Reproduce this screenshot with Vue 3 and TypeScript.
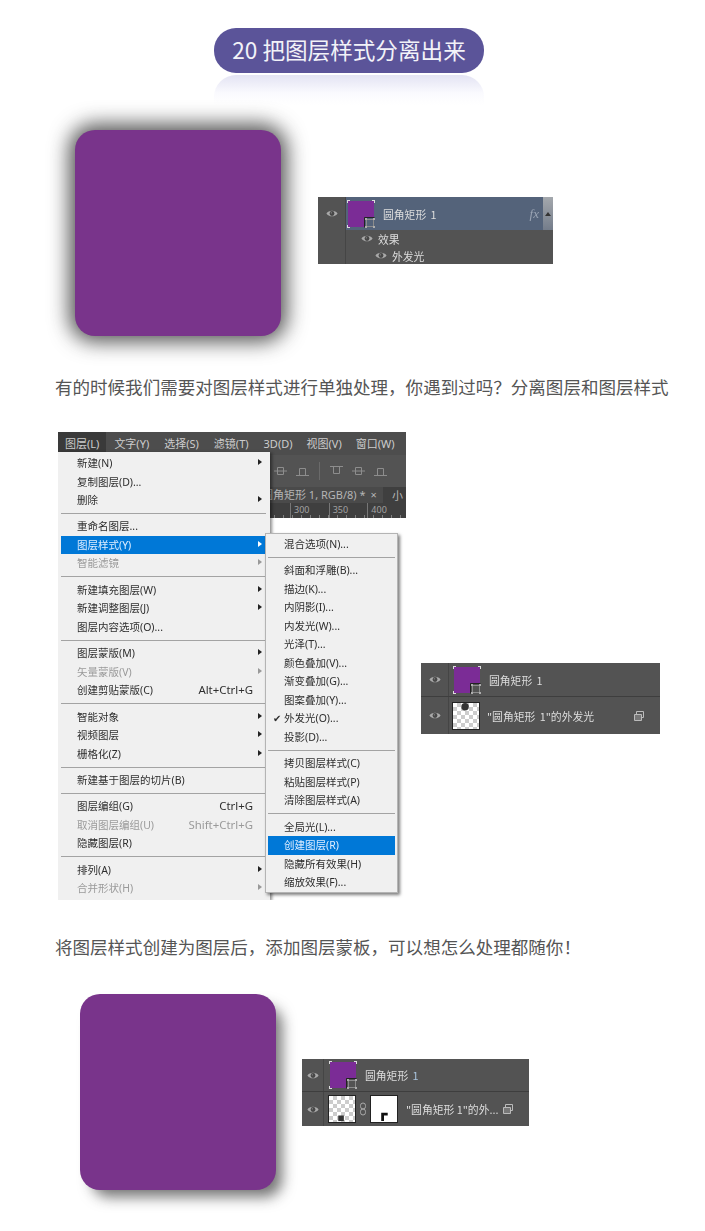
<script setup lang="ts">
interface MenuRow {
  label?: string
  sep?: boolean
  sub?: boolean
  off?: boolean
  hot?: boolean
  check?: boolean
  keys?: string
}

const menuBar = ['图层(L)', '文字(Y)', '选择(S)', '滤镜(T)', '3D(D)', '视图(V)', '窗口(W)']

const layerMenu: MenuRow[] = [
  { label: '新建(N)', sub: true },
  { label: '复制图层(D)...' },
  { label: '删除', sub: true },
  { sep: true },
  { label: '重命名图层...' },
  { label: '图层样式(Y)', sub: true, hot: true },
  { label: '智能滤镜', sub: true, off: true },
  { sep: true },
  { label: '新建填充图层(W)', sub: true },
  { label: '新建调整图层(J)', sub: true },
  { label: '图层内容选项(O)...' },
  { sep: true },
  { label: '图层蒙版(M)', sub: true },
  { label: '矢量蒙版(V)', sub: true, off: true },
  { label: '创建剪贴蒙版(C)', keys: 'Alt+Ctrl+G' },
  { sep: true },
  { label: '智能对象', sub: true },
  { label: '视频图层', sub: true },
  { label: '栅格化(Z)', sub: true },
  { sep: true },
  { label: '新建基于图层的切片(B)' },
  { sep: true },
  { label: '图层编组(G)', keys: 'Ctrl+G' },
  { label: '取消图层编组(U)', keys: 'Shift+Ctrl+G', off: true },
  { label: '隐藏图层(R)' },
  { sep: true },
  { label: '排列(A)', sub: true },
  { label: '合并形状(H)', sub: true, off: true }
]

const styleMenu: MenuRow[] = [
  { label: '混合选项(N)...' },
  { sep: true },
  { label: '斜面和浮雕(B)...' },
  { label: '描边(K)...' },
  { label: '内阴影(I)...' },
  { label: '内发光(W)...' },
  { label: '光泽(T)...' },
  { label: '颜色叠加(V)...' },
  { label: '渐变叠加(G)...' },
  { label: '图案叠加(Y)...' },
  { label: '外发光(O)...', check: true },
  { label: '投影(D)...' },
  { sep: true },
  { label: '拷贝图层样式(C)' },
  { label: '粘贴图层样式(P)' },
  { label: '清除图层样式(A)' },
  { sep: true },
  { label: '全局光(L)...' },
  { label: '创建图层(R)', hot: true },
  { label: '隐藏所有效果(H)' },
  { label: '缩放效果(F)...' }
]

const rulerMarks = ['300', '350', '400']
</script>

<template>
  <div class="page">
    <svg class="defs" width="0" height="0" aria-hidden="true">
      <symbol id="eye" viewBox="0 0 14 10">
        <path d="M0.5 5C3 0.6 11 0.6 13.5 5C11 9.4 3 9.4 0.5 5Z" fill="#a9a9a9" />
        <circle cx="7" cy="5" r="2.8" fill="#474747" />
        <circle cx="6.2" cy="4.2" r="0.7" fill="#999" />
      </symbol>
      <symbol id="shape" viewBox="0 0 30 30">
        <path d="M2 2H28V18H18V28H2Z" fill="#7b2c96" />
        <path d="M28.5 18.5H18.5V28.5" fill="none" stroke="#222" />
        <rect x="20.5" y="20.5" width="7" height="7" fill="none" stroke="#8c8c8c" />
        <path d="M19 19h2v2h-2zM27 19h2v2h-2zM19 27h2v2h-2zM27 27h2v2h-2z" fill="#adadad" />
        <path d="M1 1h3v1H2v2H1zM26 1h3v3h-1V2h-2zM1 26h1v2h2v1H1z" fill="#ddd" />
      </symbol>
      <symbol id="stack" viewBox="0 0 12 12">
        <path d="M1.5 4.5h7v6h-7z" fill="#777" stroke="#bbb" />
        <path d="M3.5 4V1.5h7v6H9" fill="none" stroke="#bbb" />
      </symbol>
      <symbol id="align-mid" viewBox="0 0 13 12">
        <path d="M0 6h13" stroke="#8d8d8d" />
        <path d="M3.5 2.5h6v7h-6z" fill="none" stroke="#8d8d8d" />
      </symbol>
      <symbol id="align-low" viewBox="0 0 13 12">
        <path d="M0 10.5h13" stroke="#8d8d8d" />
        <path d="M3.5 3.5h6v7h-6z" fill="none" stroke="#8d8d8d" />
      </symbol>
      <symbol id="align-top" viewBox="0 0 13 12">
        <path d="M0 1.5h13" stroke="#8d8d8d" />
        <path d="M3.5 1.5h6v7h-6z" fill="none" stroke="#8d8d8d" />
      </symbol>
    </svg>

    <header class="head">
      <h1 class="pill">20 把图层样式分离出来</h1>
      <div class="shine"></div>
    </header>

    <section class="demo demo-glow">
      <div class="square square-glow"></div>
      <div class="panel panel-a">
        <div class="layer layer-on">
          <div class="eye-cell"><svg class="eye"><use href="#eye" /></svg></div>
          <svg class="thumb"><use href="#shape" /></svg>
          <span class="name">圆角矩形 1</span>
          <i class="fx">fx</i>
          <div class="scroll"><span class="scroll-arrow"></span></div>
        </div>
        <div class="effect effect-one">
          <svg class="eye"><use href="#eye" /></svg><span>效果</span>
        </div>
        <div class="effect effect-two">
          <svg class="eye"><use href="#eye" /></svg><span>外发光</span>
        </div>
      </div>
    </section>

    <p class="copy copy-first">有的时候我们需要对图层样式进行单独处理，你遇到过吗？分离图层和图层样式</p>

    <section class="steps">
      <div class="shot">
        <div class="app">
          <nav class="menubar">
            <span v-for="(item, i) in menuBar" :key="item" :class="['bar-item', { 'bar-item--open': i === 0 }]">{{ item }}</span>
          </nav>
          <div class="tools">
            <svg class="tool"><use href="#align-mid" /></svg>
            <svg class="tool"><use href="#align-low" /></svg>
            <span class="tool-sep"></span>
            <svg class="tool"><use href="#align-top" /></svg>
            <svg class="tool"><use href="#align-mid" /></svg>
            <svg class="tool"><use href="#align-low" /></svg>
          </div>
          <div class="tabs">
            <span class="tab">圆角矩形 1, RGB/8) * <b>×</b></span>
            <span class="tab-next">小</span>
          </div>
          <div class="ruler">
            <span v-for="mark in rulerMarks" :key="mark" class="mark">{{ mark }}</span>
          </div>
        </div>

        <ul class="menu menu-main">
          <template v-for="(row, i) in layerMenu" :key="i">
            <li v-if="row.sep" class="sep"></li>
            <li v-else :class="['row', { 'row--off': row.off, 'row--hot': row.hot }]">
              <span>{{ row.label }}</span>
              <span v-if="row.keys" class="keys">{{ row.keys }}</span>
              <span v-if="row.sub" class="arrow"></span>
            </li>
          </template>
        </ul>

        <ul class="menu menu-sub">
          <template v-for="(row, i) in styleMenu" :key="i">
            <li v-if="row.sep" class="sep"></li>
            <li v-else :class="['row', { 'row--hot': row.hot }]">
              <span v-if="row.check" class="check">✔</span>
              <span>{{ row.label }}</span>
            </li>
          </template>
        </ul>
      </div>

      <div class="panel panel-b">
        <div class="layer">
          <div class="eye-cell"><svg class="eye"><use href="#eye" /></svg></div>
          <svg class="thumb"><use href="#shape" /></svg>
          <span class="name">圆角矩形 1</span>
        </div>
        <div class="layer layer-last">
          <div class="eye-cell"><svg class="eye"><use href="#eye" /></svg></div>
          <svg class="thumb checker" viewBox="0 0 28 28">
            <circle cx="13" cy="4" r="4" fill="#333" />
          </svg>
          <span class="name">"圆角矩形 1"的外发光</span>
          <svg class="stack"><use href="#stack" /></svg>
        </div>
      </div>
    </section>

    <p class="copy copy-second">将图层样式创建为图层后，添加图层蒙板，可以想怎么处理都随你！</p>

    <section class="demo demo-cast">
      <div class="square square-cast"></div>
      <div class="panel panel-c">
        <div class="layer">
          <div class="eye-cell"><svg class="eye"><use href="#eye" /></svg></div>
          <svg class="thumb"><use href="#shape" /></svg>
          <span class="name">圆角矩形 <em>1</em></span>
        </div>
        <div class="layer layer-last">
          <div class="eye-cell"><svg class="eye"><use href="#eye" /></svg></div>
          <svg class="thumb checker" viewBox="0 0 28 28">
            <rect x="10" y="21" width="6" height="6" fill="#333" />
          </svg>
          <svg class="link" viewBox="0 0 8 14">
            <rect x="1.5" y="1" width="5" height="6" rx="2.5" fill="none" stroke="#aaa" />
            <rect x="1.5" y="7" width="5" height="6" rx="2.5" fill="none" stroke="#aaa" />
          </svg>
          <svg class="thumb mask" viewBox="0 0 28 28">
            <path d="M11 27V18H18V21H14V27Z" fill="#111" />
          </svg>
          <span class="name name-short">"圆角矩形 1"的外...</span>
          <svg class="stack"><use href="#stack" /></svg>
        </div>
      </div>
    </section>
  </div>
</template>

<style scoped>
.page {
  width: 705px;
  height: 1231px;
  overflow: hidden;
  background: #fff;
  font-family: "Noto Sans CJK SC", "Noto Sans", sans-serif;
}
.defs {
  position: absolute;
}

.head {
  display: flex;
  flex-direction: column;
  align-items: center;
  padding: 28px 7px 0 0;
}
.pill {
  width: 270px;
  height: 45px;
  margin: 0;
  border-radius: 22px;
  background: #5b5499;
  color: #f2f2f8;
  font-size: 22.6px;
  font-weight: 400;
  line-height: 43px;
  text-align: center;
}
.shine {
  width: 270px;
  height: 30px;
  margin-top: 2px;
  border-radius: 22px 22px 0 0;
  background: linear-gradient(#e3e3f3, #fafafe 60%, #fff);
}

.demo {
  display: flex;
  align-items: flex-start;
}
.demo-glow {
  margin-top: 25px;
  padding-left: 75px;
}
.demo-cast {
  margin-top: 35px;
  padding-left: 80px;
}
.square {
  flex: none;
  border-radius: 20px;
  background: #79348b;
}
.square-glow {
  width: 206px;
  height: 206px;
  box-shadow: 0 0 20px 6px rgba(30, 30, 30, 0.75);
}
.square-cast {
  width: 196px;
  height: 196px;
  box-shadow: 9px 10px 14px -3px rgba(30, 30, 30, 0.62);
}

.copy {
  margin: 0;
  color: #555;
  font-size: 17.55px;
  line-height: 24px;
  padding-left: 55px;
  white-space: nowrap;
}
.copy-first {
  margin-top: 39px;
}
.copy-second {
  margin-top: 35px;
}

.steps {
  display: flex;
  align-items: flex-start;
  margin-top: 33px;
  padding-left: 58px;
}

.panel {
  flex: none;
  background: #535353;
  color: #ddd;
  font-size: 10.8px;
  filter: blur(0.3px);
}
.panel-a {
  width: 235px;
  height: 67px;
  margin: 67px 0 0 37px;
  background: linear-gradient(#454545, #454545) 27px 0 / 1px 100% no-repeat #535353;
}
.panel-b {
  width: 239px;
  height: 71px;
  margin: 231px 0 0 15px;
}
.panel-c {
  width: 227px;
  height: 67px;
  margin: 65px 0 0 26px;
}
.layer {
  display: flex;
  align-items: center;
  height: 34px;
  border-bottom: 1px solid #3e3e3e;
  box-sizing: border-box;
}
.layer-last {
  height: 37px;
  border-bottom: 0;
}
.panel-a .layer {
  height: 33px;
}
.panel-c .layer {
  height: 33px;
}
.panel-c .layer-last {
  height: 34px;
}
.layer-on {
  border-bottom: 0;
  background: linear-gradient(#54637a, #54637a) 27px 0 / 100% 100% no-repeat;
}
.eye-cell {
  display: flex;
  flex: none;
  align-items: center;
  justify-content: center;
  box-sizing: border-box;
  width: 28px;
  height: 100%;
  border-right: 1px solid #454545;
}
.panel-c .eye-cell {
  width: 22px;
}
.eye {
  width: 12px;
  height: 9px;
}
.thumb {
  flex: none;
  width: 30px;
  height: 30px;
  margin-left: 3px;
}
.panel-a .thumb {
  margin-left: 0;
}
.panel-c .thumb {
  margin-left: 4px;
}
.checker {
  box-sizing: border-box;
  width: 28px;
  height: 28px;
  border: 1px solid #222;
  background: repeating-conic-gradient(#ccc 0 25%, #fff 0 50%) 0 0 / 8px 8px;
}
.mask {
  box-sizing: border-box;
  width: 28px;
  height: 28px;
  border: 1px solid #222;
  background: #fff;
}
.panel-c .mask {
  margin-left: 3px;
}
.link {
  flex: none;
  width: 8px;
  height: 14px;
  margin-left: 3px;
}
.name {
  margin-left: 7px;
  white-space: nowrap;
  word-spacing: 2px;
}
.name-short {
  margin-left: 8px;
  word-spacing: 0;
}
.name em {
  color: #a9c4dd;
  font-style: normal;
}
.fx {
  margin-left: auto;
  margin-right: 4px;
  color: #9aa4b4;
  font-family: "Liberation Serif", serif;
  font-size: 13px;
}
.scroll {
  display: flex;
  align-items: center;
  justify-content: center;
  width: 10px;
  height: 100%;
  background: linear-gradient(#a4a8ad, #747d8b);
}
.scroll-arrow {
  border-right: 3px solid transparent;
  border-bottom: 4px solid #333;
  border-left: 3px solid transparent;
}
.stack {
  flex: none;
  width: 12px;
  height: 12px;
  margin-left: auto;
  margin-right: 15px;
}
.effect {
  display: flex;
  align-items: center;
  gap: 5px;
  height: 17px;
}
.effect-one {
  padding-left: 43px;
}
.effect-two {
  padding-left: 57px;
}

.shot {
  position: relative;
  flex: none;
  width: 348px;
  height: 468px;
  overflow: hidden;
  font-family: "Noto Sans", "Noto Sans CJK SC", sans-serif;
  font-size: 10.5px;
  filter: blur(0.3px);
}
.app {
  height: 86px;
  background: #535353;
  color: #ccc;
}
.menubar {
  display: flex;
  align-items: center;
  height: 23px;
  background: #4d4d4d;
  font-size: 11px;
}
.bar-item {
  padding: 0 7px;
  margin-right: 1px;
  line-height: 23px;
}
.bar-item:nth-child(n + 6) {
  margin-left: -1px;
}
.bar-item--open {
  background: #3a3a3a;
}
.tools {
  display: flex;
  align-items: center;
  gap: 9px;
  height: 32px;
  padding-left: 216px;
}
.tool {
  width: 13px;
  height: 12px;
}
.tool-sep {
  width: 1px;
  height: 18px;
  background: #6a6a6a;
  margin: 0 1px;
}
.tabs {
  display: flex;
  align-items: center;
  height: 16px;
  background: #3f3f3f;
  color: #b5b5b5;
  font-size: 11px;
}
.tab {
  width: 121px;
  height: 100%;
  padding-left: 204px;
  background: #4a4a4a;
  line-height: 16px;
  white-space: nowrap;
}
.tab b {
  margin-left: 2px;
  font-weight: 400;
}
.tab-next {
  margin-left: 9px;
}
.ruler {
  display: flex;
  height: 15px;
  padding-left: 232px;
  background: repeating-linear-gradient(90deg, #808080 0 1px, transparent 1px 9px) 0 100% / 100% 3px no-repeat #3f3f3f;
  color: #a2a2a2;
  font-size: 9px;
}
.mark {
  box-sizing: border-box;
  width: 44px;
  padding-left: 3px;
  border-left: 1px solid #777;
  line-height: 13px;
}

.menu {
  position: absolute;
  margin: 0;
  padding: 0;
  box-sizing: border-box;
  list-style: none;
  background: #f0f0f0;
  color: #2e2e2e;
}
.menu-main {
  top: 20px;
  left: 0;
  width: 212px;
  height: 448px;
  padding: 2px 4px 0 3px;
  box-shadow: 2px 1px 3px rgba(0, 0, 0, 0.45);
}
.menu-sub {
  top: 101px;
  left: 207px;
  width: 133px;
  height: 360px;
  padding: 1px 2px 0 2px;
  border: 1px solid #b4b4b4;
  box-shadow: 2px 2px 3px rgba(0, 0, 0, 0.5);
}
.row {
  position: relative;
  height: 18.5px;
  padding-left: 16px;
  line-height: 18px;
  white-space: nowrap;
}
.row--off {
  color: #9a9a9a;
}
.row--hot {
  background: #0078d7;
  color: #dfeeff;
}
.keys {
  position: absolute;
  right: 13px;
  font-size: 11.4px;
}
.arrow {
  position: absolute;
  top: 5px;
  right: 4px;
  border-top: 3px solid transparent;
  border-bottom: 3px solid transparent;
  border-left: 4px solid #222;
}
.row--off .arrow {
  border-left-color: #999;
}
.row--hot .arrow {
  border-left-color: #fff;
}
.sep {
  height: 1px;
  margin: 3.5px 0 3.4px;
  background: #a3a3a3;
}
.check {
  position: absolute;
  left: 5px;
  font-size: 10px;
}
</style>
